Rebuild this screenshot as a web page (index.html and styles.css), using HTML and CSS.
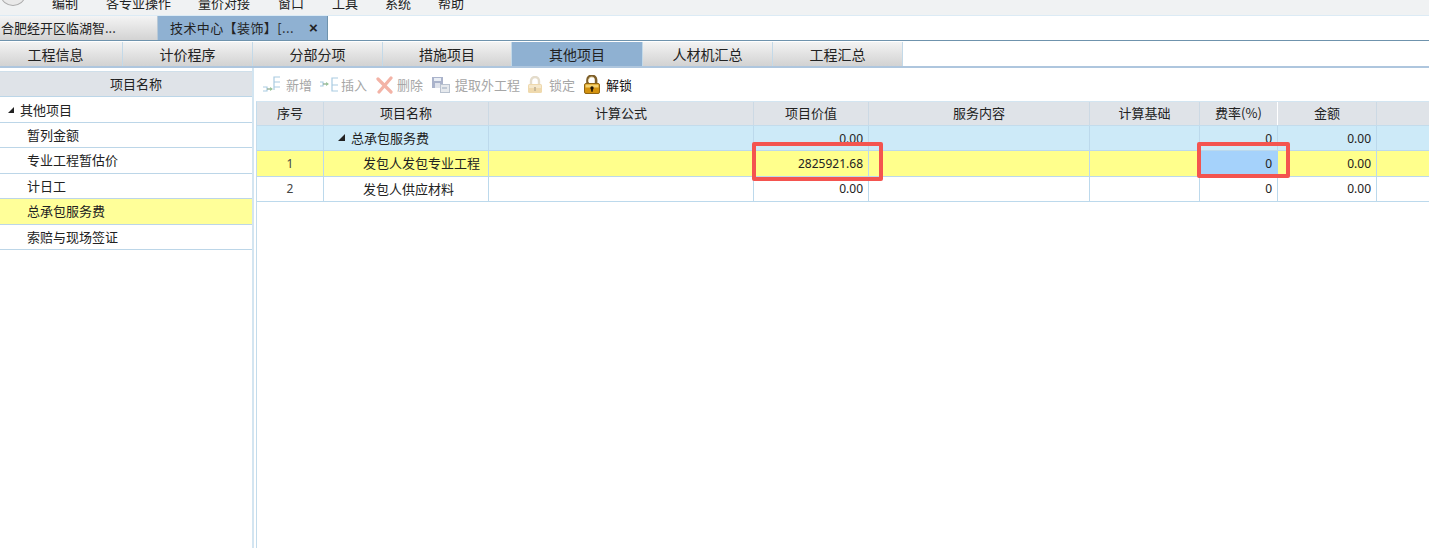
FILE: index.html
```html
<!DOCTYPE html>
<html lang="zh-CN">
<head>
<meta charset="utf-8">
<title>其他项目</title>
<link rel="stylesheet" href="styles.css">
</head>
<body>
<div class="app">
  <nav class="menubar">
    <span class="logo"></span>
    <span class="m m1">编制</span>
    <span class="m m2">各专业操作</span>
    <span class="m m3">量价对接</span>
    <span class="m m4">窗口</span>
    <span class="m m5">工具</span>
    <span class="m m6">系统</span>
    <span class="m m7">帮助</span>
  </nav>
  <div class="doctabs">
    <div class="doctab">合肥经开区临湖智...</div>
    <div class="doctab active"><span>技术中心【装饰】[...</span><b class="close">×</b></div>
  </div>
  <div class="subtabs">
    <div class="subtab w1">工程信息</div>
    <div class="subtab w2">计价程序</div>
    <div class="subtab w2">分部分项</div>
    <div class="subtab w4">措施项目</div>
    <div class="subtab w3 active">其他项目</div>
    <div class="subtab w2">人材机汇总</div>
    <div class="subtab w2">工程汇总</div>
  </div>
  <main class="body">
    <aside class="side">
      <div class="side-head">项目名称</div>
      <div class="side-row root"><i class="tri"></i>其他项目</div>
      <div class="side-row">暂列金额</div>
      <div class="side-row">专业工程暂估价</div>
      <div class="side-row">计日工</div>
      <div class="side-row sel">总承包服务费</div>
      <div class="side-row">索赔与现场签证</div>
    </aside>
    <section class="content">
      <div class="toolbar">
        <span class="tool t1"><svg width="20" height="20" viewBox="0 0 20 20"><path d="M0 12h4v4H0M11 15V2h6M11 7h6M11 12h6" fill="none" stroke="#a9cbe2" stroke-width="1.200"/><path d="M4 14h5" stroke="#8fae8f" stroke-width="1.300"/><path d="M7 12l3 2-3 2z" fill="#9cc49c"/></svg>新增</span>
        <span class="tool t2"><svg width="18" height="20" viewBox="0 0 18 20"><path d="M0 7h3v4H0M12 10V3h6M12 10h6M12 10v6h6" fill="none" stroke="#a9cbe2" stroke-width="1.200"/><path d="M3 9h5" stroke="#8fae8f" stroke-width="1.300"/><path d="M6 7l3 2-3 2z" fill="#9cc49c"/></svg>插入</span>
        <span class="tool t3"><svg width="18" height="18" viewBox="0 0 18 18"><path d="M2 3l13 13M15 2L3 16" stroke="#f3b3a6" stroke-width="3.200" stroke-linecap="round"/></svg>删除</span>
        <span class="tool t4"><svg width="18" height="20" viewBox="0 0 18 20"><rect x="0" y="2" width="11" height="11" fill="#aab3cb"/><rect x="2" y="3" width="7" height="3" fill="#e8edf4"/><rect x="3" y="8" width="5" height="5" fill="#dfe3ec"/><rect x="8.500" y="9.500" width="9" height="8" fill="#e6e9ed" stroke="#b9c2cf"/><path d="M10 13h5" stroke="#9aa9bd"/></svg>提取外工程</span>
        <span class="tool t5"><svg width="16" height="18" viewBox="0 0 16 18"><path d="M4 8V5a4 4 0 0 1 8 0v3" fill="none" stroke="#e4dccb" stroke-width="2.400"/><rect x="1" y="8" width="14" height="9" rx="1.500" fill="#efd9ad"/><rect x="2" y="9" width="12" height="3" fill="#f5e8cc"/><rect x="7" y="11" width="2" height="4" fill="#c9b99a"/></svg>锁定</span>
        <span class="tool t6"><svg width="16" height="19" viewBox="0 0 16 19"><path d="M3.500 9V5a4.300 4.300 0 0 1 8.600 0v4" fill="none" stroke="#7e5f2a" stroke-width="2.600"/><path d="M4.500 7V5a3.300 3.300 0 0 1 5 -2.500" fill="none" stroke="#e9d7a8" stroke-width="1"/><rect x="0.500" y="8.500" width="15" height="10" rx="1.500" fill="#d3920f" stroke="#8f6514"/><rect x="1.500" y="9.500" width="13" height="3" fill="#f4d271"/><circle cx="8" cy="13" r="1.700" fill="#1f1405"/><rect x="7.200" y="13.500" width="1.600" height="3.200" fill="#1f1405"/></svg>解锁</span>
      </div>
      <div class="grid">
        <div class="row head">
          <div class="c c1">序号</div><div class="c c2">项目名称</div><div class="c c3">计算公式</div><div class="c c4">项目价值</div><div class="c c5">服务内容</div><div class="c c6">计算基础</div><div class="c c7">费率(%)</div><div class="c c8">金额</div><div class="c c9"></div>
        </div>
        <div class="row group">
          <div class="c c1"></div><div class="c c2 left g"><i class="tri"></i>总承包服务费</div><div class="c c3"></div><div class="c c4 num">0.00</div><div class="c c5"></div><div class="c c6"></div><div class="c c7 num">0</div><div class="c c8 num">0.00</div><div class="c c9"></div>
        </div>
        <div class="row current">
          <div class="c c1 idx">1</div><div class="c c2 left">发包人发包专业工程</div><div class="c c3"></div><div class="c c4 num">2825921.68</div><div class="c c5"></div><div class="c c6"></div><div class="c c7 num focus">0</div><div class="c c8 num">0.00</div><div class="c c9"></div>
        </div>
        <div class="row last">
          <div class="c c1 idx">2</div><div class="c c2 left">发包人供应材料</div><div class="c c3"></div><div class="c c4 num">0.00</div><div class="c c5"></div><div class="c c6"></div><div class="c c7 num">0</div><div class="c c8 num">0.00</div><div class="c c9"></div>
        </div>
      </div>
    </section>
    <div class="mark mark-a"></div>
    <div class="mark mark-b"></div>
  </main>
</div>
</body>
</html>
```

FILE: styles.css
```css
* { box-sizing: border-box; }
html, body { margin: 0; height: 100%; overflow: hidden; background: #fff; }
body { font-family: "Noto Sans CJK SC", "Noto Sans", sans-serif; color: #222; font-size: 13px; }
.app { display: flex; flex-direction: column; height: 548px; width: 1429px; }

.menubar { height: 16px; background: #f0f2f3; border-bottom: 1px solid #dcebf5; position: relative; overflow: hidden; display: flex; font-size: 13px; }
.logo { position: absolute; left: 1px; top: -14px; width: 24px; height: 20px; border: 1px solid #aaa; border-radius: 50%; background: #e9e9e9; }
.m { margin-top: -6px; line-height: 18px; white-space: nowrap; }
.m1 { margin-left: 52px; }
.m2 { margin-left: 28px; }
.m3 { margin-left: 27px; }
.m4 { margin-left: 28px; }
.m5 { margin-left: 28px; }
.m6 { margin-left: 27px; }
.m7 { margin-left: 27px; }

.doctabs { height: 25px; display: flex; border-bottom: 1px solid #6f93ad; }
.doctab { width: 158px; height: 24px; line-height: 23px; font-size: 13px; padding-left: 1px; white-space: nowrap; background: linear-gradient(#f4f4f4, #d3d3d3); border-right: 1px solid #b9c9d6; }
.doctab.active { width: 170px; background: #8fb1d2; padding-left: 12px; display: flex; border-right: 1px solid #6f93ad; }
.doctab.active span { width: 139px; letter-spacing: .4px; }
.close { font-family: "Liberation Sans", sans-serif; font-size: 15px; font-weight: 700; line-height: 24px; }

.subtabs { height: 26px; margin-top: 1px; display: flex; border-bottom: 2px solid #aec6de; }
.subtab { height: 24px; font-size: 14px; line-height: 24px; text-align: center; background: linear-gradient(#f3f3f3, #d2d2d2); border-right: 1px solid #c3d9e8; }
.w1 { width: 123px; padding-right: 11px; }
.w2 { width: 130px; }
.w3 { width: 131px; }
.w4 { width: 129px; }
.subtab.active { background: #8fb1d2; }

.body { flex: 1; display: flex; position: relative; min-height: 0; }
.side { width: 254px; padding-top: 3px; border-right: 2px solid #d3e5f1; }
.side-head { height: 26px; line-height: 24px; text-align: center; padding-left: 20px; background: #dfe3e8; border-top: 1px solid #cfdfea; border-bottom: 1px solid #bcd6e8; }
.side-row { height: 25.400px; line-height: 23px; padding-left: 27px; border-bottom: 1px solid #bcd6e8; white-space: nowrap; }
.side-row.root { height: 26px; padding-left: 8px; display: flex; align-items: center; line-height: 22px; }
.side-row.sel { background: #ffff99; line-height: 24px; }
.tri { display: inline-block; width: 0; height: 0; margin-right: 6px; border-style: solid; border-width: 0 0 7px 7px; border-color: transparent transparent #222 transparent; }
.side-row .tri { border-width: 0 0 6px 6px; }

.content { flex: 1; min-width: 0; padding-left: 2px; display: flex; flex-direction: column; }
.toolbar { height: 33px; display: flex; align-items: center; color: #a6a6a6; flex: none; }
.tool { display: flex; align-items: center; gap: 3px; white-space: nowrap; line-height: 20px; }
.t1 { margin-left: 7px; }
.t2 { margin-left: 8px; }
.t3 { margin-left: 9px; }
.t4 { margin-left: 9px; gap: 5px; }
.t5 { margin-left: 7px; gap: 6px; }
.t6 { margin-left: 9px; gap: 6px; color: #111; }

.grid { flex: 1; border-top: 1px solid #d3e5f1; border-left: 1px solid #c3dcec; }
.row { display: flex; height: 25px; border-bottom: 1px solid #bcd9ec; line-height: 23px; }
.c { height: 100%; border-right: 1px solid #bcd9ec; text-align: center; white-space: nowrap; }
.c1 { width: 67px; }
.c2 { width: 165px; }
.c3 { width: 265px; }
.c4 { width: 115px; }
.c5 { width: 221px; }
.c6 { width: 110px; }
.c7 { width: 78px; }
.c8 { width: 99px; }
.c9 { flex: 1; border-right: 0; }
.head { height: 24px; line-height: 22px; background: #dfe3e8; border-bottom: 1px solid #c3dcec; }
.head .c { border-right-color: #ccd9e4; }
.head .c7 { border-right-color: #fff; }
.group { background: #cdeaf8; }
.current { background: #ffff8c; height: 26px; }
.left { text-align: left; padding-left: 39px; }
.left.g { padding-left: 14px; display: flex; align-items: center; padding-bottom: 2px; }
.num { text-align: right; padding-right: 5px; font-family: "Noto Sans", sans-serif; font-size: 12px; line-height: 25px; }
.idx { font-family: "Noto Sans", sans-serif; font-size: 12px; color: #444; line-height: 25px; }
.current .num, .current .idx { line-height: 26px; }
.last .num, .last .idx { line-height: 24px; }
.focus { background: #a5d2fb; border-right-color: #a5d2fb; }

.mark { position: absolute; border: 4px solid #f4544f; border-radius: 2px; }
.mark-a { left: 752px; top: 74px; width: 131px; height: 39px; }
.mark-b { left: 1197px; top: 74px; width: 93px; height: 36px; }
```
